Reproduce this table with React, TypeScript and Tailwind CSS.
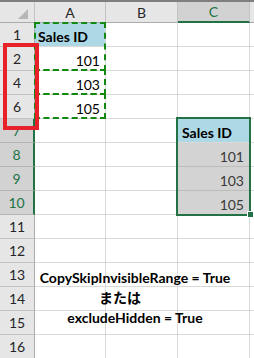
type Row = {
  n: string
  a?: string
  c?: string
  head?: boolean
  sel?: boolean
}

const rows: Row[] = [
  { n: "1", a: "Sales ID", head: true },
  { n: "2", a: "101" },
  { n: "4", a: "103" },
  { n: "6", a: "105" },
  { n: "7", c: "Sales ID", head: true, sel: true },
  { n: "8", c: "101", sel: true },
  { n: "9", c: "103", sel: true },
  { n: "10", c: "105", sel: true },
  { n: "11" },
  { n: "12" },
  { n: "13" },
  { n: "14" },
  { n: "15" },
  { n: "16" },
]

function RowHeader({ row }: { row: Row }) {
  return (
    <div
      className={
        row.sel
          ? "h-[24px] flex items-center justify-center bg-[#d2d2d2] text-[#217346] border-b border-b-[#b4b4b4] border-r-2 border-r-[#217346]"
          : "h-[24px] flex items-center justify-center bg-[#e6e6e6] text-[#262626] border-b border-b-[#c3c3c3] border-r border-r-[#ababab]"
      }
    >
      {row.n}
    </div>
  )
}

function CellA({ row }: { row: Row }) {
  if (row.head) {
    if (!row.a) return <div className="h-[24px] border-b border-r border-[#d9d9d9]" />
    return (
      <div className="h-[24px] flex items-end pl-[3px] pb-px bg-[#add8e6] border-b border-r border-[#d9d9d9] font-bold">
        {row.a}
      </div>
    )
  }
  return (
    <div className="h-[24px] flex items-end justify-end pr-[5px] pb-px border-b border-r border-[#d9d9d9]">
      {row.a}
    </div>
  )
}

function CellC({ row }: { row: Row }) {
  if (row.sel && row.head) {
    return (
      <div className="h-[24px] flex items-end pl-[4px] pb-px bg-[#add8e6] border-b border-r border-[#d9d9d9] font-bold">
        {row.c}
      </div>
    )
  }
  if (row.sel) {
    return (
      <div className="h-[24px] flex items-end justify-end pr-[5px] pb-px bg-[#d3d3d3] text-[#3a3a3a] border-b border-r border-[#bcbcbc]">
        {row.c}
      </div>
    )
  }
  return <div className="h-[24px] border-b border-r border-[#d9d9d9]" />
}

export default function App() {
  return (
    <div className="relative w-[254px] h-[358px] overflow-hidden bg-white text-[14px] leading-[17px] text-black font-['Lato','Noto_Sans_CJK_JP',sans-serif]">
      <div className="grid grid-cols-[35px_71px_72px_72px_1fr] border-t-2 border-t-[#7f7f7f]">
        {/* column headers */}
        <div className="h-[21px] flex items-end justify-end pr-[6px] pb-[3px] bg-[#e6e6e6] border-b border-b-[#ababab] border-r border-r-[#c3c3c3]">
          <svg width="10" height="10" viewBox="0 0 10 10">
            <polygon points="10,0 10,10 0,10" fill="#b7b7b7" />
          </svg>
        </div>
        <div className="h-[21px] flex items-center justify-center bg-[#e6e6e6] text-[#262626] border-b border-b-[#ababab] border-r border-r-[#c3c3c3]">
          A
        </div>
        <div className="h-[21px] flex items-center justify-center bg-[#e6e6e6] text-[#262626] border-b border-b-[#ababab] border-r border-r-[#c3c3c3]">
          B
        </div>
        <div className="h-[21px] flex items-center justify-center bg-[#d2d2d2] text-[#217346] border-b-2 border-b-[#217346] border-r border-r-[#c3c3c3]">
          C
        </div>
        <div className="h-[21px] bg-[#e6e6e6] border-b border-b-[#ababab]" />

        {rows.map((row) => (
          <div key={row.n} className="contents">
            <RowHeader row={row} />
            <CellA row={row} />
            <div className="h-[24px] border-b border-r border-[#d9d9d9]" />
            <CellC row={row} />
            <div className="h-[24px] border-b border-[#d9d9d9]" />
          </div>
        ))}
      </div>

      {/* copy marquee on A1:A2, A4, A6 */}
      <div className="absolute left-[34px] top-[22px] w-[72px] h-[49px] border-2 border-dashed border-[#128a12]" />
      <div className="absolute left-[34px] top-[69px] w-[72px] h-[26px] border-2 border-dashed border-[#128a12]" />
      <div className="absolute left-[34px] top-[93px] w-[72px] h-[26px] border-2 border-dashed border-[#128a12]" />

      {/* pasted range selection */}
      <div className="absolute left-[176px] top-[117px] w-[75px] h-[99px] border-2 border-[#217346]" />
      <div className="absolute left-[247px] top-[211px] w-[7px] h-[7px] bg-[#217346] border border-white" />

      {/* highlight on visible row numbers */}
      <div className="absolute left-[3px] top-[43px] w-[36px] h-[87px] border-4 border-[#e8202a]" />

      <div className="absolute left-[33px] top-[268px] w-[204px] text-center font-bold leading-[20px]">
        <div>CopySkipInvisibleRange = True</div>
        <div className="pr-[30px]">または</div>
        <div>excludeHidden = True</div>
      </div>
    </div>
  )
}
